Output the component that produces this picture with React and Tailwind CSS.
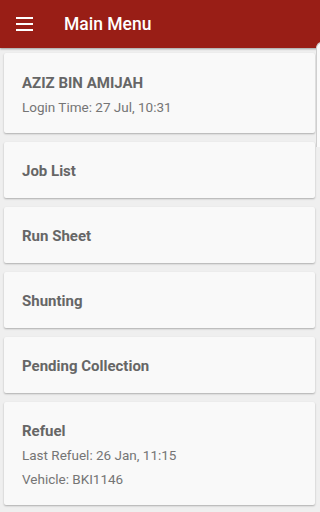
const font = { fontFamily: "Roboto, 'Noto Sans', sans-serif" }

const Card = ({ title, lines = [], className = "" }) => {
  return (
    <div className={`bg-[#f9f9f9] rounded-[2px] shadow-[0_1px_2px_rgba(0,0,0,0.28)] px-[18px] ${className}`}>
      <div className="text-[15px] leading-[24px] font-bold text-[#666666]">{title}</div>
      {lines.map((line) => (
        <div key={line} className="text-[13.5px] leading-[24px] text-[#757575]">{line}</div>
      ))}
    </div>
  )
}

const MenuItem = ({ title }) => {
  return (
    <div className="bg-[#f9f9f9] rounded-[2px] shadow-[0_1px_2px_rgba(0,0,0,0.28)] px-[18px] h-14 flex items-center">
      <div className="text-[15px] leading-[24px] font-bold text-[#666666] pt-px">{title}</div>
    </div>
  )
}

export default function App() {
  return (
    <div style={font} className="w-[320px] h-[512px] bg-[#efefef] relative overflow-hidden">
      <div className="h-12 bg-[#991e16] flex items-center shadow-[0_1px_2px_rgba(0,0,0,0.35)] relative z-10">
        <div className="w-16 flex pl-4">
          <div className="flex flex-col gap-[4px] w-[17px]">
            <div className="h-[2px] bg-white" />
            <div className="h-[2px] bg-white" />
            <div className="h-[2px] bg-white" />
          </div>
        </div>
        <div className="text-white text-[17.5px] font-medium">Main Menu</div>
      </div>

      <div className="flex flex-col gap-[9px] pl-1 pr-[5px] pt-[5px]">
        <Card title="AZIZ BIN AMIJAH" lines={["Login Time: 27 Jul, 10:31"]} className="pt-[18px] pb-[14px]" />
        <MenuItem title="Job List" />
        <MenuItem title="Run Sheet" />
        <MenuItem title="Shunting" />
        <MenuItem title="Pending Collection" />
        <Card title="Refuel" lines={["Last Refuel: 26 Jan, 11:15", "Vehicle: BKI1146"]} className="pt-[17px] pb-[14px]" />
      </div>

      {/* peeking panel edge on the right */}
      <div className="absolute left-[316px] top-[42px] w-[8px] h-[105px] bg-[#fafafa] border-l border-t border-[#cfcfcf] rounded-tl-[6px] z-20" />
    </div>
  )
}
